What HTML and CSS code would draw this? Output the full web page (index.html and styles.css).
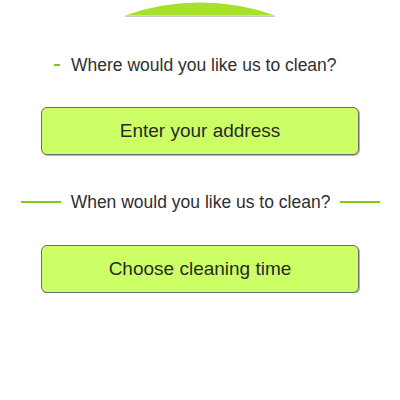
FILE: index.html
```html
<!DOCTYPE html>
<html>
<head>
<meta charset="utf-8">
<link rel="stylesheet" href="styles.css">
</head>
<body>
<div class="top">
  <svg class="arc" width="150" height="17" viewBox="0 0 150 17">
    <path d="M0 13.5 A223 223 0 0 1 150 13.5 Z" fill="#a6e22c"/>
    <rect x="0" y="13.5" width="150" height="1.5" fill="#c9c9d6"/>
  </svg>
</div>
<div class="heading heading-first">
  <span class="dash"></span>
  <span class="label">Where would you like us to clean?</span>
</div>
<div class="btn btn-address">Enter your address</div>
<div class="heading heading-second">
  <span class="line"></span>
  <span class="label">When would you like us to clean?</span>
  <span class="line"></span>
</div>
<div class="btn btn-time">Choose cleaning time</div>
</body>
</html>
```
FILE: styles.css
```css
html, body {
  margin: 0;
  padding: 0;
  background: #ffffff;
}
body {
  font-family: "Liberation Sans", Arial, sans-serif;
  color: #2f2f2f;
  width: 400px;
}
.top {
  display: flex;
  justify-content: center;
  height: 17px;
  padding-top: 2px;
}
.arc {
  display: block;
}
.heading {
  display: flex;
  align-items: center;
  height: 20px;
  font-size: 17.5px;
  line-height: 20px;
}
.heading-first {
  margin-top: 36px;
  padding-left: 54px;
  gap: 11px;
}
.dash {
  width: 6px;
  height: 2px;
  background: #7ecb12;
}
.heading-second {
  margin-top: 37px;
  padding: 0 20px 0 21px;
  gap: 10px;
}
.line {
  flex: 1;
  height: 2px;
  background: #7ecb12;
}
.btn {
  margin: 32px 41px 0 41px;
  height: 46px;
  box-sizing: content-box;
  border: 1px solid #6c6c6c;
  border-radius: 6px;
  background: #ccff66;
  box-shadow: 1px 1px 0 #b5b5b5;
  display: flex;
  align-items: center;
  justify-content: center;
  font-size: 19px;
  color: #2a2a2a;
}
.btn-time {
  margin-top: 33px;
}
```
